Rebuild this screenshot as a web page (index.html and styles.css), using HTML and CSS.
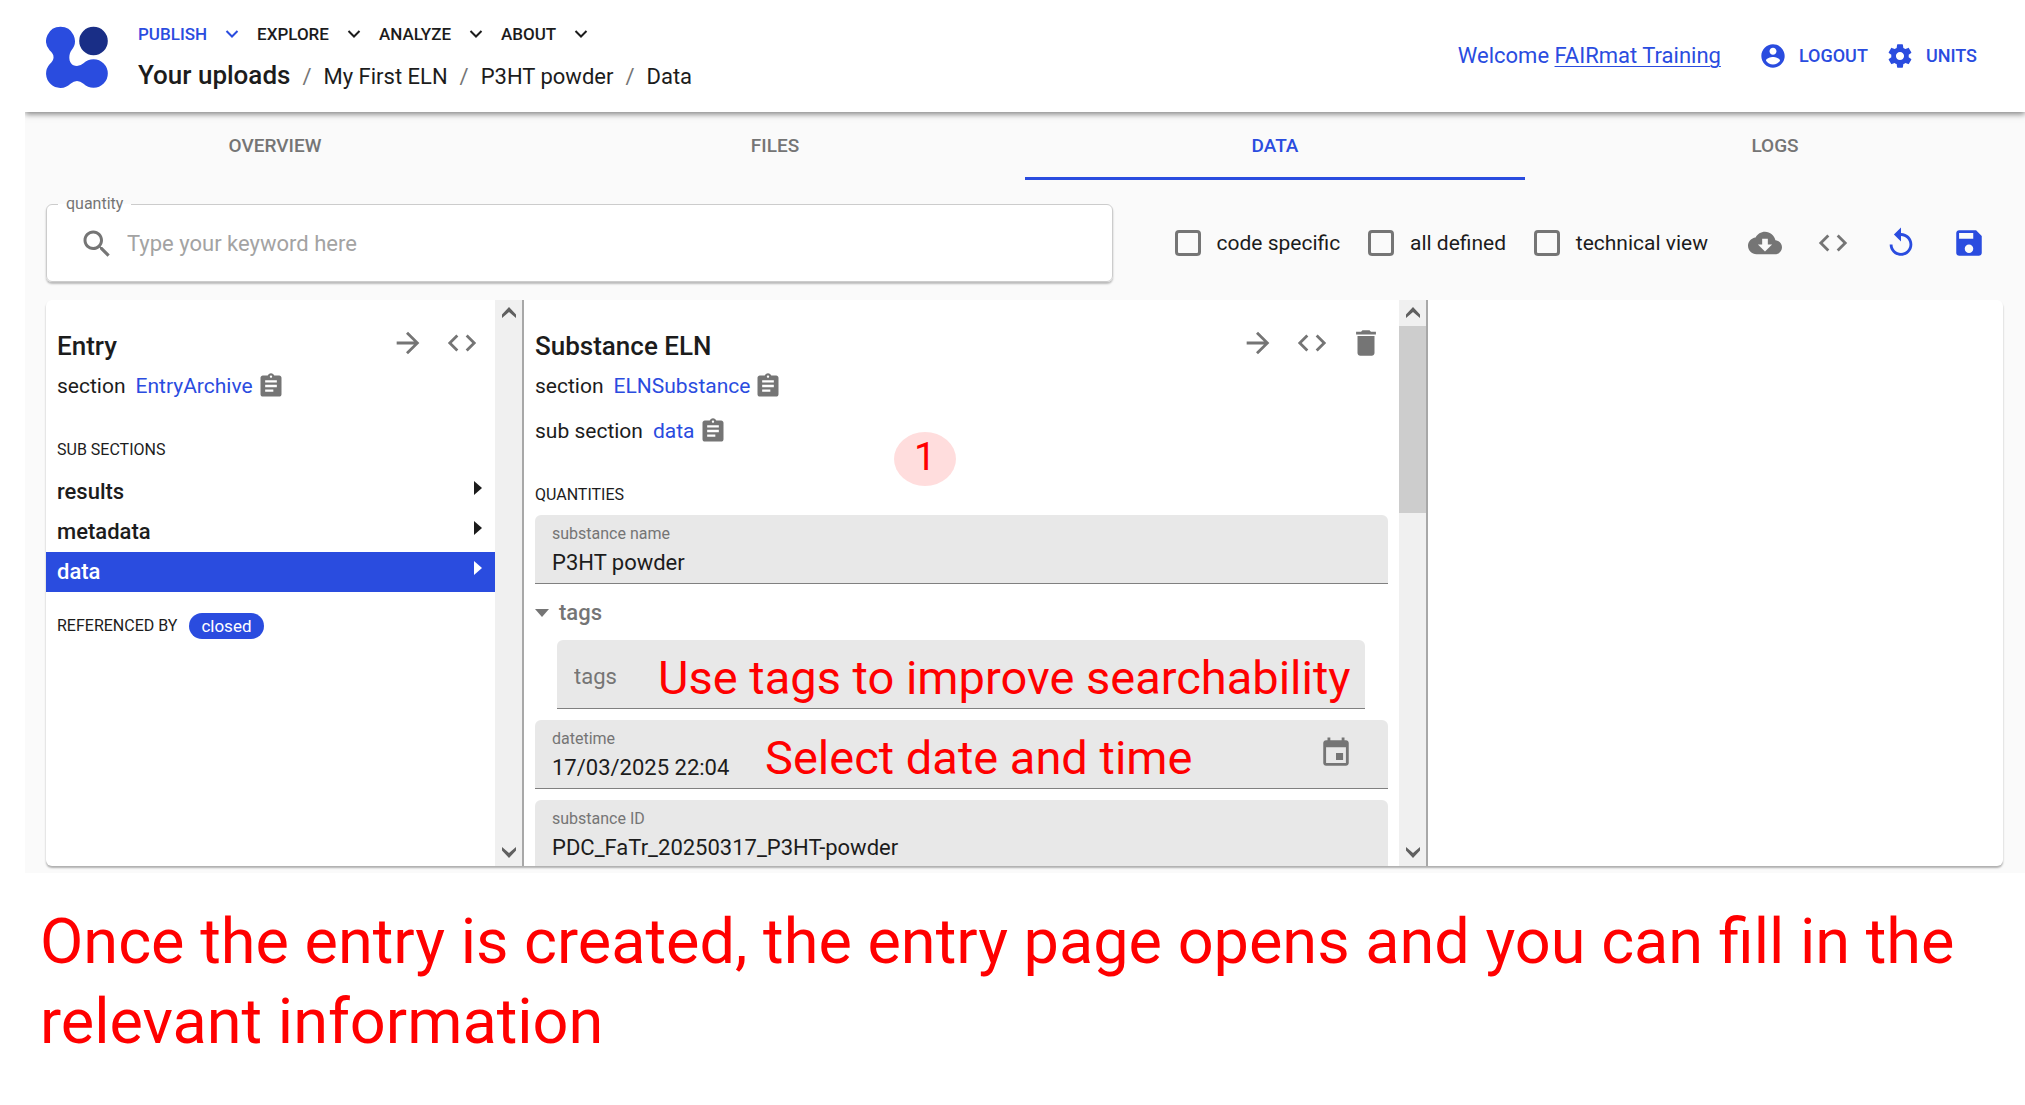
FILE: index.html
```html
<!DOCTYPE html>
<html lang="en">
<head>
<meta charset="utf-8">
<meta name="viewport" content="width=device-width, initial-scale=1">
<title>P3HT powder - Data</title>
<link rel="stylesheet" href="styles.css">
</head>
<body>
<svg class="sprite" aria-hidden="true">
  <symbol id="chevron" viewBox="0 0 24 24"><path d="M6.500 9l5.500 5.500L17.500 9" fill="none" stroke="currentColor" stroke-width="2"/></symbol>
  <symbol id="arrow" viewBox="0 0 24 24"><path d="M12 4l-1.410 1.410L16.170 11H4v2h12.170l-5.580 5.590L12 20l8-8z"/></symbol>
  <symbol id="code" viewBox="0 0 24 24"><path d="M9.400 16.600L4.800 12l4.600-4.600L8 6l-6 6 6 6 1.400-1.400zm5.200 0l4.600-4.600-4.600-4.600L16 6l6 6-6 6-1.400-1.400z"/></symbol>
  <symbol id="trash" viewBox="0 0 24 24"><path d="M6 19c0 1.100.9 2 2 2h8c1.100 0 2-.9 2-2V7H6v12zM19 4h-3.500l-1-1h-5l-1 1H5v2h14V4z"/></symbol>
  <symbol id="clip" viewBox="0 0 24 24"><path d="M19 3h-4.180C14.400 1.840 13.300 1 12 1c-1.300 0-2.400.84-2.820 2H5c-1.100 0-2 .9-2 2v14c0 1.100.9 2 2 2h14c1.100 0 2-.9 2-2V5c0-1.100-.9-2-2-2zm-7 0c.55 0 1 .45 1 1s-.45 1-1 1-1-.45-1-1 .45-1 1-1zm2 14H7v-2h7v2zm3-4H7v-2h10v2zm0-4H7V7h10v2z"/></symbol>
  <symbol id="search" viewBox="0 0 24 24"><path d="M15.500 14h-.79l-.28-.27C15.410 12.590 16 11.110 16 9.500 16 5.910 13.090 3 9.500 3S3 5.910 3 9.500 5.910 16 9.500 16c1.610 0 3.090-.59 4.230-1.570l.27.28v.79l5 4.990L20.490 19l-4.990-5zm-6 0C7.010 14 5 11.990 5 9.500S7.010 5 9.500 5 14 7.010 14 9.500 11.990 14 9.500 14z"/></symbol>
  <symbol id="user" viewBox="0 0 24 24"><path d="M12 2C6.480 2 2 6.480 2 12s4.480 10 10 10 10-4.480 10-10S17.520 2 12 2zm0 3c1.660 0 3 1.340 3 3s-1.340 3-3 3-3-1.340-3-3 1.340-3 3-3zm0 14.200c-2.500 0-4.710-1.280-6-3.220.03-1.990 4-3.080 6-3.080 1.990 0 5.970 1.090 6 3.080-1.290 1.940-3.500 3.220-6 3.220z"/></symbol>
  <symbol id="gear" viewBox="0 0 24 24"><path d="M19.430 12.980c.04-.32.07-.64.07-.98s-.03-.66-.07-.98l2.110-1.650c.19-.15.24-.42.12-.64l-2-3.460c-.12-.22-.39-.3-.61-.22l-2.490 1c-.52-.4-1.080-.73-1.690-.98l-.38-2.650C14.460 2.180 14.250 2 14 2h-4c-.25 0-.46.18-.49.42l-.38 2.650c-.61.25-1.170.59-1.690.98l-2.490-1c-.23-.09-.49 0-.61.22l-2 3.460c-.13.22-.07.49.12.64l2.110 1.650c-.04.32-.07.65-.07.98s.03.66.07.98l-2.110 1.650c-.19.15-.24.42-.12.64l2 3.460c.12.22.39.3.61.22l2.490-1c.52.4 1.080.73 1.690.98l.38 2.650c.03.24.24.42.49.42h4c.25 0 .46-.18.49-.42l.38-2.650c.61-.25 1.170-.59 1.690-.98l2.490 1c.23.09.49 0 .61-.22l2-3.460c.12-.22.07-.49-.12-.64l-2.110-1.650zM12 15.500c-1.930 0-3.500-1.570-3.500-3.500s1.570-3.500 3.500-3.500 3.500 1.570 3.500 3.500-1.570 3.500-3.500 3.500z"/></symbol>
  <symbol id="cloud" viewBox="0 0 24 24"><path d="M19.350 10.040C18.670 6.590 15.640 4 12 4 9.110 4 6.600 5.640 5.350 8.040 2.340 8.360 0 10.910 0 14c0 3.310 2.690 6 6 6h13c2.760 0 5-2.240 5-5 0-2.640-2.050-4.780-4.650-4.960zM17 13l-5 5-5-5h3V9h4v4h3z"/></symbol>
  <symbol id="replay" viewBox="0 0 24 24"><path d="M12 5V1L7 6l5 5V7c3.310 0 6 2.690 6 6s-2.690 6-6 6-6-2.690-6-6H4c0 4.420 3.580 8 8 8s8-3.580 8-8-3.580-8-8-8z"/></symbol>
  <symbol id="save" viewBox="0 0 24 24"><path d="M17 3H5c-1.110 0-2 .9-2 2v14c0 1.100.89 2 2 2h14c1.100 0 2-.9 2-2V7l-4-4zm-5 16c-1.660 0-3-1.340-3-3s1.340-3 3-3 3 1.340 3 3-1.340 3-3 3zm3-10H5V5h10v4z"/></symbol>
  <symbol id="calendar" viewBox="0 0 24 24"><path d="M17 12h-5v5h5v-5zM16 1v2H8V1H6v2H5c-1.110 0-1.990.9-1.990 2L3 19c0 1.100.89 2 2 2h14c1.100 0 2-.9 2-2V5c0-1.100-.9-2-2-2h-1V1h-2zm3 18H5V8h14v11z"/></symbol>
  <symbol id="caret" viewBox="0 0 8 14"><path d="M0 0l8 7-8 7z"/></symbol>
  <symbol id="scroll-up" viewBox="0 0 14 12"><path d="M0 7.500L7 0l7 7.500V11L7 5 0 11z"/></symbol>
</svg>

<div class="app">
  <header class="header">
    <svg class="logo" viewBox="0 0 62 62" role="img" aria-label="NOMAD">
      <path fill="#2a4cdf" d="M14.500.7A14.300 14.300 0 0 1 25.500 24.200C22 29 22 40 31 40Q34.500 40 37.500 37.300A14.300 14.300 0 1 1 37.500 57.700Q31 52.500 24.500 57.700A14.300 14.300 0 0 1 3.600 38.200Q11.500 31 3.600 24.300A14.300 14.300 0 0 1 14.500.7z"/>
      <circle cx="47.500" cy="15" r="14.300" fill="#192e86"/>
    </svg>
    <div class="header-main">
      <nav class="menu" aria-label="Main">
        <button class="menu-item menu-item-active" type="button">PUBLISH <svg class="icon-s"><use href="#chevron"/></svg></button>
        <button class="menu-item" type="button">EXPLORE <svg class="icon-s"><use href="#chevron"/></svg></button>
        <button class="menu-item" type="button">ANALYZE <svg class="icon-s"><use href="#chevron"/></svg></button>
        <button class="menu-item" type="button">ABOUT <svg class="icon-s"><use href="#chevron"/></svg></button>
      </nav>
      <nav class="crumbs" aria-label="Breadcrumb">
        <a class="crumb-root" href="#uploads">Your uploads</a><span class="slash">/</span>
        <a href="#eln">My First ELN</a><span class="slash">/</span>
        <a href="#entry">P3HT powder</a><span class="slash">/</span>
        <a href="#data">Data</a>
      </nav>
    </div>
    <div class="account">
      <span class="welcome">Welcome <a class="profile" href="#profile">FAIRmat Training</a></span>
      <button class="account-btn" type="button"><svg class="icon-m"><use href="#user"/></svg>LOGOUT</button>
      <button class="account-btn" type="button"><svg class="icon-m"><use href="#gear"/></svg>UNITS</button>
    </div>
  </header>

  <nav class="tabs" aria-label="Entry">
    <button class="tab" type="button">OVERVIEW</button>
    <button class="tab" type="button">FILES</button>
    <button class="tab tab-active" type="button">DATA</button>
    <button class="tab" type="button">LOGS</button>
  </nav>

  <main class="content">
    <div class="toolbar">
      <fieldset class="search">
        <legend class="search-legend"><label for="quantity">quantity</label></legend>
        <div class="search-row">
          <svg class="icon-xl"><use href="#search"/></svg>
          <input class="search-input" id="quantity" type="text" placeholder="Type your keyword here">
        </div>
      </fieldset>
      <div class="options">
        <label class="option"><input class="check" type="checkbox">code specific</label>
        <label class="option"><input class="check" type="checkbox">all defined</label>
        <label class="option"><input class="check" type="checkbox">technical view</label>
      </div>
      <div class="tools">
        <button class="icon-btn" type="button" aria-label="Download"><svg class="icon-l"><use href="#cloud"/></svg></button>
        <button class="icon-btn" type="button" aria-label="Source"><svg class="icon-l"><use href="#code"/></svg></button>
        <button class="icon-btn icon-btn-primary" type="button" aria-label="Reload"><svg class="icon-l"><use href="#replay"/></svg></button>
        <button class="icon-btn icon-btn-primary" type="button" aria-label="Save"><svg class="icon-l"><use href="#save"/></svg></button>
      </div>
    </div>

    <div class="browser">
      <section class="lane lane-entry">
        <div class="lane-body">
          <div class="lane-head">
            <h2 class="lane-title">Entry</h2>
            <button class="icon-btn" type="button" aria-label="Open"><svg class="icon-l"><use href="#arrow"/></svg></button>
            <button class="icon-btn" type="button" aria-label="Source"><svg class="icon-l"><use href="#code"/></svg></button>
          </div>
          <p class="def">section <a class="def-link" href="#EntryArchive">EntryArchive</a><svg class="icon-c"><use href="#clip"/></svg></p>
          <h3 class="group-title">SUB SECTIONS</h3>
          <nav class="items" aria-label="Sub sections">
            <a class="item" href="#results">results <svg class="caret"><use href="#caret"/></svg></a>
            <a class="item" href="#metadata">metadata <svg class="caret"><use href="#caret"/></svg></a>
            <a class="item item-active" href="#data">data <svg class="caret"><use href="#caret"/></svg></a>
          </nav>
          <div class="refs"><h3 class="refs-title">REFERENCED BY</h3><button class="chip" type="button">closed</button></div>
        </div>
        <div class="scrollbar" aria-hidden="true">
          <svg class="scroll-arrow"><use href="#scroll-up"/></svg>
          <svg class="scroll-arrow scroll-down"><use href="#scroll-up"/></svg>
        </div>
      </section>

      <section class="lane lane-data">
        <div class="lane-body">
          <div class="lane-head">
            <h2 class="lane-title">Substance ELN</h2>
            <button class="icon-btn" type="button" aria-label="Open"><svg class="icon-l"><use href="#arrow"/></svg></button>
            <button class="icon-btn" type="button" aria-label="Source"><svg class="icon-l"><use href="#code"/></svg></button>
            <button class="icon-btn" type="button" aria-label="Delete"><svg class="icon-l"><use href="#trash"/></svg></button>
          </div>
          <p class="def">section <a class="def-link" href="#ELNSubstance">ELNSubstance</a><svg class="icon-c"><use href="#clip"/></svg></p>
          <p class="def">sub section <a class="def-link" href="#data">data</a><svg class="icon-c"><use href="#clip"/></svg></p>
          <h3 class="group-title">QUANTITIES</h3>
          <form class="fields">
            <div class="field">
              <label class="field-label" for="name">substance name</label>
              <input class="field-input" id="name" type="text" value="P3HT powder">
            </div>
            <button class="toggle" type="button"><svg class="toggle-caret" viewBox="0 0 14 8"><path d="M0 0h14L7 8z"/></svg>tags</button>
            <div class="field field-nested">
              <input class="field-input field-input-empty" type="text" placeholder="tags" aria-label="tags">
              <span class="note">Use tags to improve searchability</span>
            </div>
            <div class="field">
              <label class="field-label" for="datetime">datetime</label>
              <input class="field-input" id="datetime" type="text" value="17/03/2025 22:04">
              <button class="icon-btn field-btn" type="button" aria-label="Pick date"><svg class="icon-l"><use href="#calendar"/></svg></button>
              <span class="note note-date">Select date and time</span>
            </div>
            <div class="field">
              <label class="field-label" for="sid">substance ID</label>
              <input class="field-input" id="sid" type="text" value="PDC_FaTr_20250317_P3HT-powder">
            </div>
          </form>
          <span class="step">1</span>
        </div>
        <div class="scrollbar" aria-hidden="true">
          <svg class="scroll-arrow"><use href="#scroll-up"/></svg>
          <span class="thumb"></span>
          <svg class="scroll-arrow scroll-down"><use href="#scroll-up"/></svg>
        </div>
      </section>
    </div>
  </main>
</div>
<p class="caption">Once the entry is created, the entry page opens and you can fill in the relevant information</p>
</body>
</html>
```
FILE: styles.css
```css
:root {
  --primary: #2a4cdf;
  --text: #1c1c1c;
  --muted: #757575;
  --note: #ff0000;
}

* { box-sizing: border-box; }

body {
  margin: 0;
  background: #fff;
  color: var(--text);
  font: 22px/32px Roboto, "Liberation Sans", sans-serif;
}

button, input { font: inherit; color: inherit; }
button { padding: 0; border: 0; background: none; cursor: pointer; }
a { color: inherit; text-decoration: none; }
h2, h3, p { margin: 0; }
svg { flex: none; fill: currentColor; }

.sprite { position: absolute; width: 0; height: 0; }
.icon-s { width: 24px; height: 24px; }
.icon-m { width: 28px; height: 28px; }
.icon-c { width: 28px; height: 28px; color: var(--muted); }
.icon-l { width: 34px; height: 34px; }
.icon-xl { width: 36px; height: 36px; color: var(--muted); }
.icon-btn { display: flex; flex: none; color: var(--muted); }
.icon-btn-primary { color: var(--primary); }

.app {
  margin-left: 25px;
  padding-bottom: 7px;
  overflow: hidden;
  background: #fafafa;
}

/* Header */
.header {
  position: relative;
  display: flex;
  padding: 21px 48px 17px 21px;
  background: #fff;
  box-shadow: 0 2px 6px rgba(0, 0, 0, .5);
}
.logo { width: 62px; height: 62px; margin: 5px 30px 0 0; }
.header-main { display: flex; flex-direction: column; gap: 10px; }
.menu { display: flex; gap: 13px; }
.menu-item {
  display: flex;
  align-items: center;
  gap: 13px;
  font-size: 17px;
  font-weight: 500;
  line-height: 26px;
}
.menu-item-active { color: var(--primary); }
.crumbs { display: flex; align-items: baseline; gap: 12px; line-height: 36px; }
.crumb-root { font-size: 26px; font-weight: 500; }
.slash { color: var(--muted); }
.account {
  display: flex;
  align-items: center;
  height: 70px;
  margin-left: auto;
  color: var(--primary);
}
.welcome { margin-right: 38px; }
.profile { text-decoration: underline; text-decoration-thickness: 1px; text-underline-offset: 3px; }
.account-btn {
  display: flex;
  align-items: center;
  gap: 12px;
  font-size: 18px;
  font-weight: 500;
}
.account-btn + .account-btn { margin-left: 18px; }

/* Tabs */
.tabs { display: grid; grid-template-columns: repeat(4, 1fr); }
.tab {
  height: 68px;
  padding-top: 3px;
  border-bottom: 3px solid transparent;
  color: var(--muted);
  font-size: 19px;
  font-weight: 500;
}
.tab-active { border-color: var(--primary); color: var(--primary); }

/* Search and view options */
.content { padding: 14px 22px 0 21px; }
.toolbar { display: flex; align-items: center; margin-bottom: 18px; }
.search {
  flex: 0 0 54.5%;
  min-width: 0;
  margin: 0;
  padding: 0 12px 7px 11px;
  border: 1px solid #ccc;
  border-radius: 6px;
  background: #fff;
  box-shadow: 0 2px 2px rgba(0, 0, 0, .25);
}
.search-legend { padding: 0 8px; color: var(--muted); font-size: 16px; line-height: 20px; }
.search-row { display: flex; align-items: center; gap: 12px; height: 60px; padding-left: 21px; }
.search-input { flex: 1; min-width: 0; padding: 0; border: 0; outline: 0; background: none; }
.search-input::placeholder { color: #a3a3a3; opacity: 1; }
.options {
  display: flex;
  flex: 1;
  justify-content: space-between;
  padding: 10px 40px 0 62px;
}
.option { display: flex; align-items: center; gap: 16px; font-size: 21px; white-space: nowrap; }
.check {
  appearance: none;
  width: 26px;
  height: 26px;
  margin: 0;
  border: 3px solid var(--muted);
  border-radius: 4px;
}
.check:checked { background: var(--primary); }
.tools { display: flex; gap: 34px; padding: 9px 17px 0 0; }

/* Archive browser */
.browser {
  display: flex;
  height: calc(100vh - 539px);
  min-height: 360px;
  overflow: hidden;
  border-radius: 6px;
  background: #fff;
  box-shadow: 0 2px 2px rgba(0, 0, 0, .3);
}
.lane { display: flex; border-right: 2px solid #a8a8a8; }
.lane-entry { flex: 0 0 478px; }
.lane-data { flex: 0 0 904px; }
.lane-body {
  position: relative;
  flex: 1;
  min-width: 0;
  padding: 26px 11px 0;
  overflow: hidden;
}
.lane-head { display: flex; align-items: flex-start; gap: 20px; height: 44px; padding-right: 5px; }
.lane-title { flex: 1; padding-top: 4px; font-size: 26px; font-weight: 500; }
.def { display: flex; align-items: center; margin-bottom: 13px; font-size: 21px; }
.def-link { margin: 0 4px 0 10px; color: var(--primary); }
.group-title {
  padding-top: 23px;
  font-size: 16px;
  font-weight: 400;
  line-height: 24px;
}
.items { margin: 10px -11px 21px; }
.item {
  display: flex;
  align-items: center;
  justify-content: space-between;
  padding: 0 13px 0 11px;
  font-weight: 500;
  line-height: 40px;
}
.item-active { background: var(--primary); color: #fff; }
.caret { width: 8px; height: 14px; margin-bottom: 8px; }
.refs { display: flex; align-items: center; gap: 12px; }
.refs-title { font-size: 16px; font-weight: 400; line-height: 24px; }
.chip {
  height: 26px;
  padding: 0 12px;
  border-radius: 13px;
  background: var(--primary);
  color: #fff;
  font-size: 17px;
  line-height: 26px;
}

.scrollbar {
  display: flex;
  flex: 0 0 27px;
  flex-direction: column;
  align-items: center;
  padding: 7px 0 8px;
  background: #f0f0f0;
  color: #606060;
}
.scroll-arrow { width: 14px; height: 12px; }
.scroll-down { margin-top: auto; rotate: 180deg; }
.thumb { width: 27px; height: 187px; margin-top: 7px; background: #cdcdcd; }

/* Quantities form */
.fields { padding-top: 8px; }
.field {
  position: relative;
  display: flex;
  flex-direction: column;
  gap: 5px;
  height: 69px;
  margin-bottom: 11px;
  padding: 9px 17px 0;
  border-bottom: 1px solid #808080;
  border-radius: 6px 6px 0 0;
  background: #e8e8e8;
}
.field-label { color: var(--muted); font-size: 16px; line-height: 20px; }
.field-input {
  width: 100%;
  height: 28px;
  padding: 0;
  border: 0;
  outline: 0;
  background: none;
  line-height: 28px;
}
.field-input-empty { height: 54px; }
.field-input-empty::placeholder { color: var(--muted); opacity: 1; }
.field-nested { margin-right: 23px; margin-left: 22px; }
.field-btn { position: absolute; top: 16px; right: 35px; }
.toggle {
  display: flex;
  align-items: center;
  gap: 10px;
  margin-bottom: 11px;
  padding-top: 2px;
  color: var(--muted);
  font-weight: 500;
}
.toggle-caret { width: 14px; height: 8px; }

/* Tutorial annotations */
.note {
  position: absolute;
  top: 10px;
  left: 101px;
  color: var(--note);
  font-size: 47px;
  line-height: 56px;
  white-space: nowrap;
}
.note-date { left: 230px; }
.step {
  position: absolute;
  top: 132px;
  left: 370px;
  width: 62px;
  height: 54px;
  border-radius: 50%;
  background: #ffdddd;
  color: var(--note);
  font-size: 39px;
  line-height: 50px;
  text-align: center;
}
.caption {
  padding: 29px 24px 0 40px;
  color: var(--note);
  font-size: 63px;
  line-height: 80px;
}
```
